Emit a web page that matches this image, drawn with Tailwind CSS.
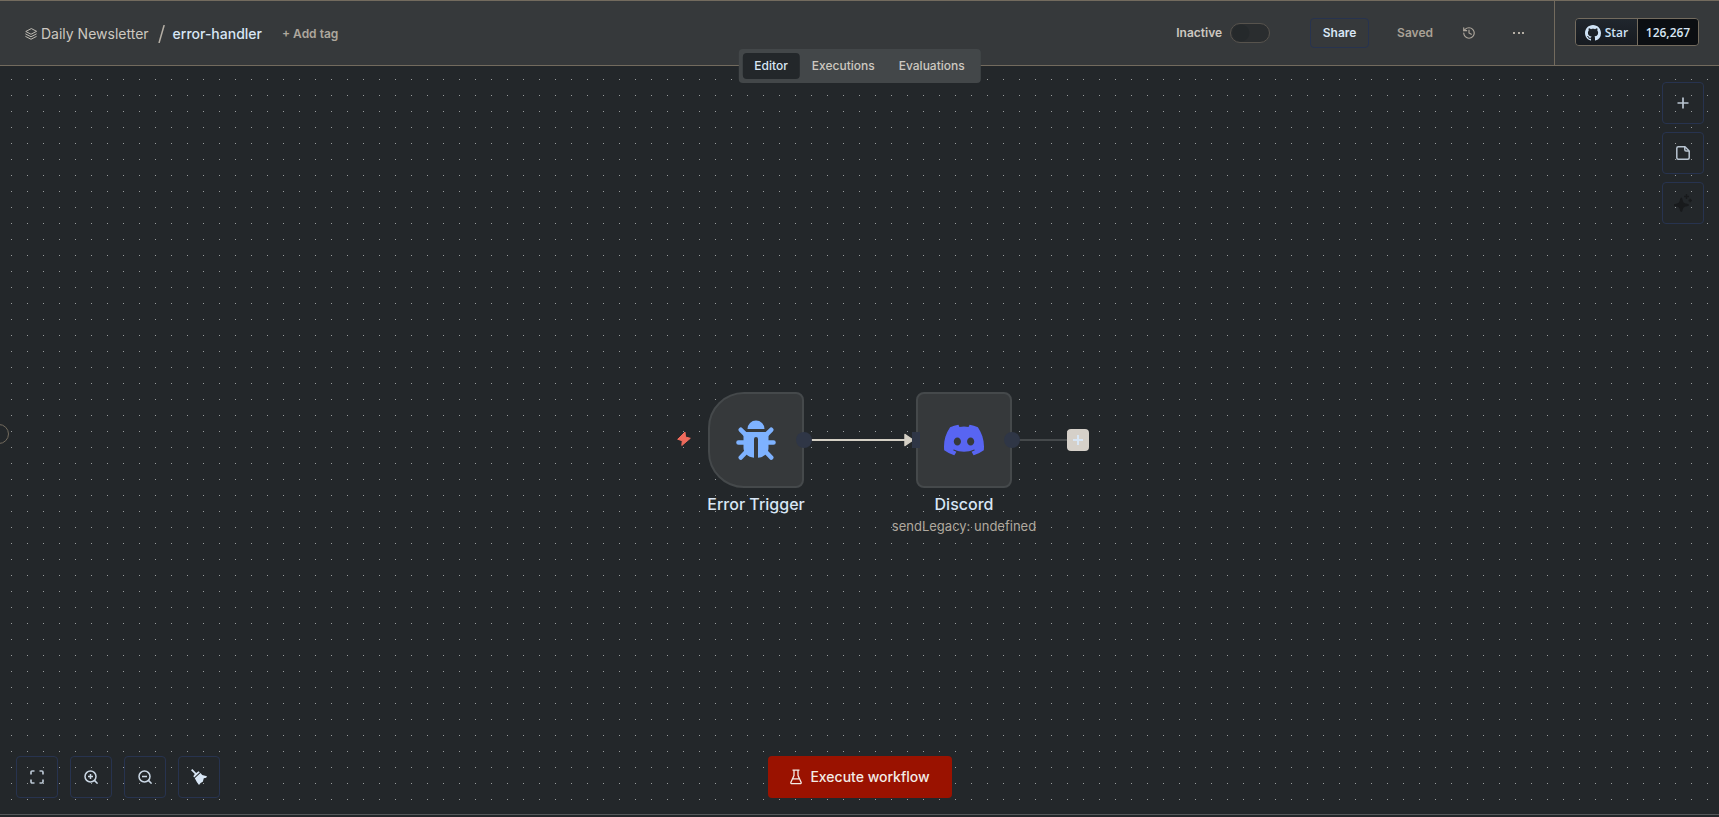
<!DOCTYPE html>
<html lang="en">
<head>
<meta charset="utf-8">
<title>error-handler</title>
<script src="https://cdn.jsdelivr.net/npm/@tailwindcss/browser@4"></script>
</head>
<body class="flex h-screen flex-col overflow-hidden bg-[#23272a] font-['Inter',sans-serif] text-[#d8e6f5]">

<header class="relative flex h-[66px] shrink-0 border-y border-[#736b5e] bg-[#36393b] text-xs font-semibold">
  <div class="flex flex-1 items-center pl-[25px] pt-[2px]">
    <a href="#" class="flex items-center gap-1 text-sm font-normal text-[#cdc8c0]">
      <svg class="size-3" viewBox="0 0 24 24" fill="none" stroke="currentColor" stroke-width="1.8" stroke-linejoin="round" stroke-linecap="round"><path d="M12 1.5 1.5 7 12 12.500 22.500 7z"/><path d="m1.500 12 10.500 5.500L22.500 12M1.500 17 12 22.500 22.500 17"/></svg>
      Daily Newsletter
    </a>
    <svg class="ml-[9px] h-[18px] w-[7px]" viewBox="0 0 7 18" stroke="#b5afa5" stroke-width="1.500"><path d="M6.200 0 1 18"/></svg>
    <button class="ml-2 text-sm font-medium text-[#d8e6f5]">error-handler</button>
    <button class="ml-5 text-[#aea79d]">+ Add tag</button>
  </div>
  <div class="flex items-center pr-[28px]">
    <label class="flex items-center gap-2 text-[#cdc8c0]">Inactive
      <input type="checkbox" class="h-5 w-10 appearance-none rounded-full border border-[#57534d] bg-[radial-gradient(circle_at_10px_9px,#25292b_8px,#2a2d2f_9px)]">
    </label>
    <button class="ml-10 h-[30px] w-[59px] rounded border border-[#27334f]">Share</button>
    <span class="ml-7 text-[#a9a196]">Saved</span>
    <button aria-label="History" class="ml-[29px] text-[#aea79d]">
      <svg class="size-[14px]" viewBox="0 0 24 24" fill="none" stroke="currentColor" stroke-width="2" stroke-linecap="round" stroke-linejoin="round"><path d="M3 12a9 9 0 1 0 9-9 9.750 9.750 0 0 0-6.740 2.740L3 8"/><path d="M3 3v5h5M12 7v5l4 2"/></svg>
    </button>
    <button aria-label="More" class="ml-9 text-[#b5afa5]">
      <svg class="h-4 w-[14px]" viewBox="0 0 14 16" fill="currentColor"><path d="M1 7h2v2H1zM6 7h2v2H6zM10 7h2v2h-2z"/></svg>
    </button>
  </div>
  <div class="flex items-center border-l border-[#736b5e] pb-[2px] pl-5 pr-5">
    <div class="flex h-7 overflow-hidden rounded-sm border border-[#736b5e] font-semibold">
      <a href="#" class="flex w-[62px] items-center justify-center gap-1 border-r border-[#736b5e] bg-linear-to-b from-[#20262d] to-[#171b20] pt-px font-['Open_Sans',sans-serif] text-[#cfe2f5]">
        <svg class="size-4" viewBox="0 0 16 16" fill="currentColor"><path d="M8 0C3.580 0 0 3.580 0 8c0 3.540 2.290 6.530 5.470 7.590.4.070.55-.17.55-.38 0-.19-.01-.82-.01-1.490-2.010.37-2.530-.49-2.690-.94-.09-.23-.48-.94-.82-1.130-.28-.15-.68-.52-.01-.53.63-.01 1.080.58 1.230.82.72 1.210 1.870.87 2.330.66.070-.52.28-.87.51-1.070-1.780-.2-3.640-.89-3.640-3.950 0-.87.31-1.590.82-2.150-.08-.2-.36-1.020.08-2.120 0 0 .67-.21 2.200.82.64-.18 1.320-.27 2-.27s1.360.09 2 .27c1.530-1.040 2.200-.82 2.200-.82.44 1.100.16 1.920.08 2.120.51.56.82 1.270.82 2.150 0 3.070-1.870 3.750-3.650 3.950.29.25.54.73.54 1.480 0 1.070-.01 1.930-.01 2.200 0 .21.15.46.55.38A8.010 8.010 0 0 0 16 8c0-4.420-3.580-8-8-8z"/></svg>
        Star
      </a>
      <a href="#" class="flex w-[60px] items-center justify-center bg-[#0b0e12] pt-px font-['Open_Sans',sans-serif]">126,267</a>
    </div>
  </div>

  <!-- View tabs straddle the header's lower edge -->
  <nav class="absolute left-1/2 top-12 z-10 flex h-[34px] -translate-x-1/2 rounded bg-[#434749] p-1 font-medium text-[#cdc8c0]">
    <button class="rounded bg-[#23272a] px-3 text-[#d8e6f5]">Editor</button>
    <button class="px-3">Executions</button>
    <button class="px-3">Evaluations</button>
  </nav>
</header>

<main class="relative flex flex-1 flex-col overflow-hidden">
  <svg class="absolute inset-0 size-full" aria-hidden="true">
    <defs><pattern id="dots" width="16" height="16" patternUnits="userSpaceOnUse"><rect x="11" y="13" width="1" height="1" fill="#999c9d"/></pattern></defs>
    <rect width="100%" height="100%" fill="url(#dots)"/>
  </svg>

  <button aria-label="Expand sidebar" class="absolute left-[-11px] top-[358px] size-5 rounded-full border border-[#736b5e] bg-[#23272a]"></button>

  <!-- Workflow graph -->
  <svg class="absolute left-[677px] top-[365px] h-4 w-[14px]" viewBox="0 0 14 16" fill="#ef6b5c" stroke="#ef6b5c" stroke-linejoin="round"><path d="M8 1 .7 8.300l4.600 1.400L4.800 14.500 13.300 7.300 8.500 6z"/></svg>

  <svg class="absolute left-[804px] top-[364px] h-5 w-[270px]" viewBox="0 0 270 20"><path d="M0 9h101v2H0z" fill="#d5d0c5"/><path d="M101 4.500 109 10l-8 5.500z" fill="#d5d0c5" stroke="#d5d0c5" stroke-width="1.500" stroke-linejoin="round"/><path d="M208 9h57v2h-57z" fill="#45494b"/></svg>

  <div class="absolute left-[708px] top-[326px] flex w-24 flex-col items-center">
    <div class="relative flex size-24 items-center justify-center rounded-l-[36px] rounded-r-lg border-2 border-[#45494b] bg-[#36393b]">
      <svg class="size-10" viewBox="0 0 40 40"><g fill="#7eb2ff"><path d="M11.500 9a8.500 8.500 0 0 1 17 0z"/><path d="M7.500 12h25v16c0 5-4.500 9-10.500 9.800V19a2 2 0 0 0-4 0v18.800C12 37 7.500 33 7.500 28z"/></g><path d="M4.800 9.800 10 15M35.200 9.800 30 15M2.500 22.500H10M37.500 22.500H30M4.800 37.500 11 31M35.200 37.500 29 31" stroke="#7eb2ff" stroke-width="4.600" stroke-linecap="round"/></svg>
      <span class="absolute -right-[10px] top-[38px] size-4 rounded-full bg-[#2f3646]"></span>
    </div>
    <h2 class="mt-[6px] whitespace-nowrap text-base font-medium leading-5">Error Trigger</h2>
  </div>

  <div class="absolute left-[889px] top-[326px] flex w-[150px] flex-col items-center">
    <div class="relative flex size-24 items-center justify-center rounded-lg border-2 border-[#45494b] bg-[#36393b]">
      <svg class="size-10" viewBox="0 0 24 24" fill="#5865f2"><path d="M20.317 4.370a19.791 19.791 0 0 0-4.885-1.515.074.074 0 0 0-.079.037c-.21.375-.444.864-.608 1.250a18.270 18.270 0 0 0-5.487 0 12.640 12.640 0 0 0-.617-1.250.077.077 0 0 0-.079-.037A19.736 19.736 0 0 0 3.677 4.370a.07.07 0 0 0-.032.027C.533 9.046-.32 13.580.099 18.057a.082.082 0 0 0 .031.057 19.900 19.900 0 0 0 5.993 3.030.078.078 0 0 0 .084-.028 14.090 14.090 0 0 0 1.226-1.994.076.076 0 0 0-.041-.106 13.107 13.107 0 0 1-1.872-.892.077.077 0 0 1-.008-.128 10.200 10.200 0 0 0 .372-.292.074.074 0 0 1 .077-.01c3.928 1.793 8.180 1.793 12.062 0a.074.074 0 0 1 .078.010c.12.098.246.198.373.292a.077.077 0 0 1-.006.127 12.299 12.299 0 0 1-1.873.892.077.077 0 0 0-.041.107c.36.698.772 1.362 1.225 1.993a.076.076 0 0 0 .084.028 19.839 19.839 0 0 0 6.002-3.030.077.077 0 0 0 .032-.054c.5-5.177-.838-9.674-3.549-13.660a.061.061 0 0 0-.031-.030zM8.020 15.330c-1.183 0-2.157-1.085-2.157-2.419 0-1.333.956-2.419 2.157-2.419 1.210 0 2.176 1.096 2.157 2.420 0 1.333-.956 2.418-2.157 2.418zm7.975 0c-1.183 0-2.157-1.085-2.157-2.419 0-1.333.955-2.419 2.157-2.419 1.210 0 2.176 1.096 2.157 2.420 0 1.333-.946 2.418-2.157 2.418z"/></svg>
      <span class="absolute -left-[6px] top-[38px] h-4 w-2 bg-[#2f3646]"></span>
      <span class="absolute -right-[10px] top-[38px] size-4 rounded-full bg-[#2f3646]"></span>
    </div>
    <h2 class="mt-[6px] whitespace-nowrap text-base font-medium leading-5">Discord</h2>
    <p class="mt-1 whitespace-nowrap text-[13px] leading-4 text-[#b0a99f]">sendLegacy: undefined</p>
  </div>

  <button aria-label="Add next node" class="absolute left-[1067px] top-[363px] flex size-[22px] items-center justify-center rounded bg-[#d5d0c9]">
    <svg class="size-[10px]" viewBox="0 0 10 10" stroke="#d8e6f5" stroke-width="2"><path d="M5 0v10M0 5h10"/></svg>
  </button>

  <!-- Canvas tools -->
  <div class="relative flex flex-col items-end gap-2 pr-[15px] pt-4">
    <button aria-label="Add node" class="flex size-[42px] items-center justify-center rounded border border-[#27334f]">
      <svg class="size-3" viewBox="0 0 12 12" stroke="#b9c5d1" stroke-width="1.700"><path d="M6 .5v11M.5 6h11"/></svg>
    </button>
    <button aria-label="Add sticky note" class="flex size-[42px] items-center justify-center rounded border border-[#27334f]">
      <svg class="size-[14px]" viewBox="0 0 14 14" fill="none" stroke="#b9c5d1" stroke-width="1.500" stroke-linejoin="round"><path d="M9 .8H2.300C1.400.8.8 1.400.8 2.300v9.400c0 .9.6 1.500 1.500 1.500h9.400c.9 0 1.500-.6 1.500-1.500V5z"/><path d="M8.800 1v2.800c0 .8.500 1.300 1.300 1.300H13"/></svg>
    </button>
    <button aria-label="Ask AI" class="flex size-[42px] items-center justify-center rounded border border-[#27334f]">
      <svg class="size-[18px]" viewBox="0 0 18 18" fill="#181a1c"><path d="M7.300 3.500C8.700 3.500 8.500 8 10.300 9c1.200.7 4.700.7 4.700 2s-3.500 1.300-4.700 2c-1.800 1-1.600 5-3 5s-1.200-4-3-5C3.100 12.300-.4 12.300-.4 11s3.500-1.300 4.700-2c1.800-1 1.600-5.500 3-5.500z"/><path d="M12.500 0v5M10 2.500h5M16.200 4.800v3.400M14.500 6.500h3.400" stroke="#181a1c" stroke-width="1.400"/></svg>
    </button>
  </div>

  <div class="relative mt-auto flex items-end px-4 pb-4">
    <div class="flex flex-1 gap-3">
      <button aria-label="Fit view" class="flex size-[42px] items-center justify-center rounded border border-[#27334f]">
        <svg class="size-[14px]" viewBox="0 0 14 14" fill="none" stroke="#b9c5d1" stroke-width="1.700"><path d="M1 4.500V2.200Q1 1 2.200 1h2.300M9.500 1h2.300Q13 1 13 2.200v2.300M13 9.500v2.300q0 1.200-1.200 1.200H9.500M4.500 13H2.200Q1 13 1 11.800V9.500"/></svg>
      </button>
      <button aria-label="Zoom in" class="flex size-[42px] items-center justify-center rounded border border-[#27334f]">
        <svg class="size-[14px]" viewBox="0 0 14 14" fill="none" stroke="#cbd8e5" stroke-width="1.500"><circle cx="6.500" cy="6.500" r="5.500"/><path d="m10.400 10.400 3.200 3.200M6.500 4v5M4 6.500h5"/></svg>
      </button>
      <button aria-label="Zoom out" class="flex size-[42px] items-center justify-center rounded border border-[#27334f]">
        <svg class="size-[14px]" viewBox="0 0 14 14" fill="none" stroke="#cbd8e5" stroke-width="1.500"><circle cx="6.500" cy="6.500" r="5.500"/><path d="m10.400 10.400 3.200 3.200M4 6.500h5"/></svg>
      </button>
      <button aria-label="Tidy up" class="flex size-[42px] items-center justify-center rounded border border-[#27334f]">
        <svg class="size-4" viewBox="0 0 16 16" fill="#d8e6f5"><path d="M0 1.300 1.300 0l3.900 3.900 2.300-1.600 1.300 1-5.600 5.300-.9-1.400 1.500-2.200z"/><path d="m9.500 4 1.700 2 4.800 1.200-.8 1.600-2.400.4-1 3.600-2.200 1.200L8 16l-2.200-3-2-3.700z"/></svg>
      </button>
    </div>
    <button class="flex h-[42px] w-[184px] items-center justify-center gap-2 rounded bg-[#9a1200] pl-px text-sm font-medium text-[#f3ece6]">
      <svg class="h-4 w-3" viewBox="0 0 12 16" fill="none" stroke="currentColor" stroke-width="1.300" stroke-linejoin="round"><path d="M2.500 1.200h7M4 1.200v5.300L.9 13.200q-.4 1.500 1.100 1.500h8q1.500 0 1.100-1.500L8 6.500V1.200M2.600 9.800h6.800"/></svg>
      Execute workflow
    </button>
    <div class="flex-1"></div>
  </div>
</main>

<footer class="h-[3px] shrink-0 border-t border-[#55585a]"></footer>
</body>
</html>
